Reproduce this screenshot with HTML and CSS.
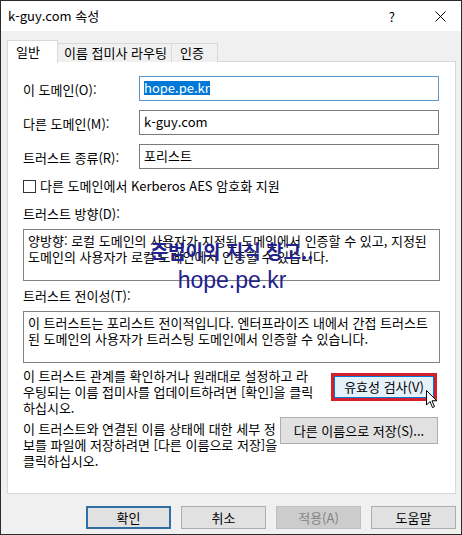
FILE: index.html
```html
<!DOCTYPE html>
<html lang="ko">
<head>
    <meta charset="UTF-8">
    <title>k-guy.com 속성</title>
    <link rel="stylesheet" href="styles.css">
</head>
<body>
    <div class="window">
        <div class="titlebar">
            <span class="title">k-guy.com 속성</span>
            <span class="help">?</span>
            <svg class="close" width="11" height="11" viewBox="0 0 11 11">
                <path d="M0.5 0.5 L10.5 10.5 M10.5 0.5 L0.5 10.5" stroke="#000" stroke-width="1" fill="none"/>
            </svg>
        </div>
        <div class="client">
            <div class="tabs">
                <div class="tab active">일반</div>
                <div class="tab">이름 접미사 라우팅</div>
                <div class="tab">인증</div>
            </div>
            <div class="panel">
                <div class="field-row">
                    <span class="label">이 도메인(O):</span>
                    <div class="input focus"><span class="sel">hope.pe.kr</span></div>
                </div>
                <div class="field-row">
                    <span class="label">다른 도메인(M):</span>
                    <div class="input">k-guy.com</div>
                </div>
                <div class="field-row">
                    <span class="label">트러스트 종류(R):</span>
                    <div class="input">포리스트</div>
                </div>
                <div class="check-row">
                    <span class="checkbox"></span>
                    <span>다른 도메인에서 Kerberos AES 암호화 지원</span>
                </div>

                <div class="group-label">트러스트 방향(D):</div>
                <div class="textbox">양방향: 로컬 도메인의 사용자가 지정된 도메인에서 인증할 수 있고, 지정된<br>도메인의 사용자가 로컬 도메인에서 인증할 수 있습니다.</div>

                <div class="group-label">트러스트 전이성(T):</div>
                <div class="textbox">이 트러스트는 포리스트 전이적입니다. 엔터프라이즈 내에서 간접 트러스트<br>된 도메인의 사용자가 트러스팅 도메인에서 인증할 수 있습니다.</div>

                <div class="action-row first">
                    <p>이 트러스트 관계를 확인하거나 원래대로 설정하고 라<br>우팅되는 이름 접미사를 업데이트하려면 [확인]을 클릭<br>하십시오.</p>
                    <div class="mark">
                        <button class="btn hover">유효성 검사(V)</button>
                        <svg class="cursor" width="12" height="19" viewBox="0 0 12 19">
                            <path d="M0.5 0.5 L0.5 15 L4 11.5 L6.5 17.5 L8.5 16.7 L6 10.8 L10.8 10.8 Z" fill="#fff" stroke="#000" stroke-width="1"/>
                        </svg>
                    </div>
                </div>
                <div class="action-row second">
                    <p>이 트러스트와 연결된 이름 상태에 대한 세부 정<br>보를 파일에 저장하려면 [다른 이름으로 저장]을<br>클릭하십시오.</p>
                    <button class="btn save">다른 이름으로 저장(S)...</button>
                </div>

                <div class="watermark">
                    <div class="wm-ko">준범이의 지식 창고..</div>
                    <div class="wm-url">hope.pe.kr</div>
                </div>
            </div>
            <div class="footer">
                <button class="btn default">확인</button>
                <button class="btn">취소</button>
                <button class="btn" disabled>적용(A)</button>
                <button class="btn">도움말</button>
            </div>
        </div>
    </div>
</body>
</html>
```

FILE: styles.css
```css
body {
    margin: 0;
    padding: 0;
    background-color: #fff;
    font-family: "Noto Sans CJK KR", sans-serif;
    font-size: 13px;
    color: #000;
}

.window {
    width: 462px;
    height: 535px;
    box-sizing: border-box;
    border: 1px solid #2b2b2b;
    display: flex;
    flex-direction: column;
    background-color: #f0f0f0;
}

.titlebar {
    height: 30px;
    background-color: #fff;
    display: flex;
    align-items: center;
    padding-left: 7px;
}

.titlebar .title {
    flex: 1;
    line-height: 16px;
}

.titlebar .help {
    margin-right: 40px;
}

.titlebar .close {
    margin-right: 15px;
}

.client {
    flex: 1;
    padding: 8px 5px 0 6px;
}

.tabs {
    display: flex;
    align-items: flex-end;
    height: 23px;
    position: relative;
    z-index: 1;
}

.tab {
    height: 19px;
    line-height: 18px;
    box-sizing: border-box;
    border: 1px solid #d9d9d9;
    border-bottom: none;
    border-left: none;
    padding: 0 6px;
    background-color: #f0f0f0;
    white-space: nowrap;
}

.tab.active {
    height: 23px;
    width: 51px;
    line-height: 22px;
    border-left: 1px solid #d9d9d9;
    background-color: #fff;
    padding: 0 0 0 8px;
    margin-bottom: -1px;
}

.tab:nth-child(2) {
    width: 114px;
    padding-left: 6px;
}

.tab:nth-child(3) {
    width: 46px;
    padding-left: 8px;
}

.panel {
    position: relative;
    height: 433px;
    box-sizing: border-box;
    border: 1px solid #d9d9d9;
    background-color: #fff;
    margin-top: -1px;
    padding: 14px 14px 0 15px;
}

.field-row {
    display: grid;
    grid-template-columns: 116px 300px;
    align-items: center;
    margin-bottom: 9px;
}

.field-row .label {
    line-height: 16px;
    padding-top: 2px;
}

.input {
    height: 25px;
    box-sizing: border-box;
    border: 1px solid #7a7a7a;
    padding: 2px 4px;
    line-height: 17px;
}

.input.focus {
    border-color: #5b97c8;
}

.sel {
    display: inline-block;
    background-color: #0078d7;
    color: #fff;
    line-height: 14px;
    margin-top: 2px;
}

.check-row {
    display: flex;
    align-items: center;
    margin-top: 3px;
    line-height: 16px;
}

.checkbox {
    width: 13px;
    height: 13px;
    box-sizing: border-box;
    border: 1px solid #333;
    margin-right: 4px;
}

.group-label {
    margin-top: 12px;
    line-height: 16px;
}

.textbox {
    margin-top: 7px;
    width: 417px;
    height: 52px;
    box-sizing: border-box;
    border: 1px solid #828282;
    padding: 3px 4px;
    line-height: 16px;
    white-space: nowrap;
}

.textbox + .group-label {
    margin-top: 7px;
}

.action-row {
    display: flex;
    align-items: flex-start;
}

.action-row p {
    margin: 0;
    line-height: 16px;
    white-space: nowrap;
}

.action-row.first {
    margin-top: 5px;
}

.action-row.first p {
    width: 308px;
}

.action-row.second {
    margin-top: 1px;
}

.action-row.second p {
    padding-top: 4px;
    width: 257px;
}

.mark {
    position: relative;
    margin-top: 5px;
    border: 3px solid #d3202c;
    width: 106px;
    height: 28px;
    box-sizing: border-box;
}

.btn {
    font-family: "Noto Sans CJK KR", sans-serif;
    font-size: 13px;
    color: #000;
    background-color: #e1e1e1;
    border: 1px solid #adadad;
    padding: 0;
    line-height: 16px;
    white-space: nowrap;
    cursor: default;
}

.btn.hover {
    width: 100%;
    height: 100%;
    background-color: #e5f1fb;
    border-color: #0078d7;
}

.cursor {
    position: absolute;
    left: 92px;
    top: 14px;
}

.btn.save {
    width: 158px;
    height: 27px;
}

.footer {
    display: flex;
    justify-content: flex-end;
    gap: 10px;
    margin-top: 12px;
}

.footer .btn {
    width: 85px;
    height: 23px;
}

.btn.default {
    border: 2px solid #2f6fa6;
}

.btn:disabled {
    background-color: #cccccc;
    border-color: #bfbfbf;
    color: #838383;
}

.watermark {
    position: absolute;
    left: 134px;
    top: 178px;
    width: 180px;
    text-align: center;
    color: #22228c;
    pointer-events: none;
}

.wm-ko {
    font-weight: bold;
    font-size: 19px;
    line-height: 22px;
    white-space: nowrap;
}

.wm-url {
    font-family: "Liberation Sans", Arial, sans-serif;
    font-size: 23px;
    line-height: 26px;
    margin-top: 5px;
}
```
